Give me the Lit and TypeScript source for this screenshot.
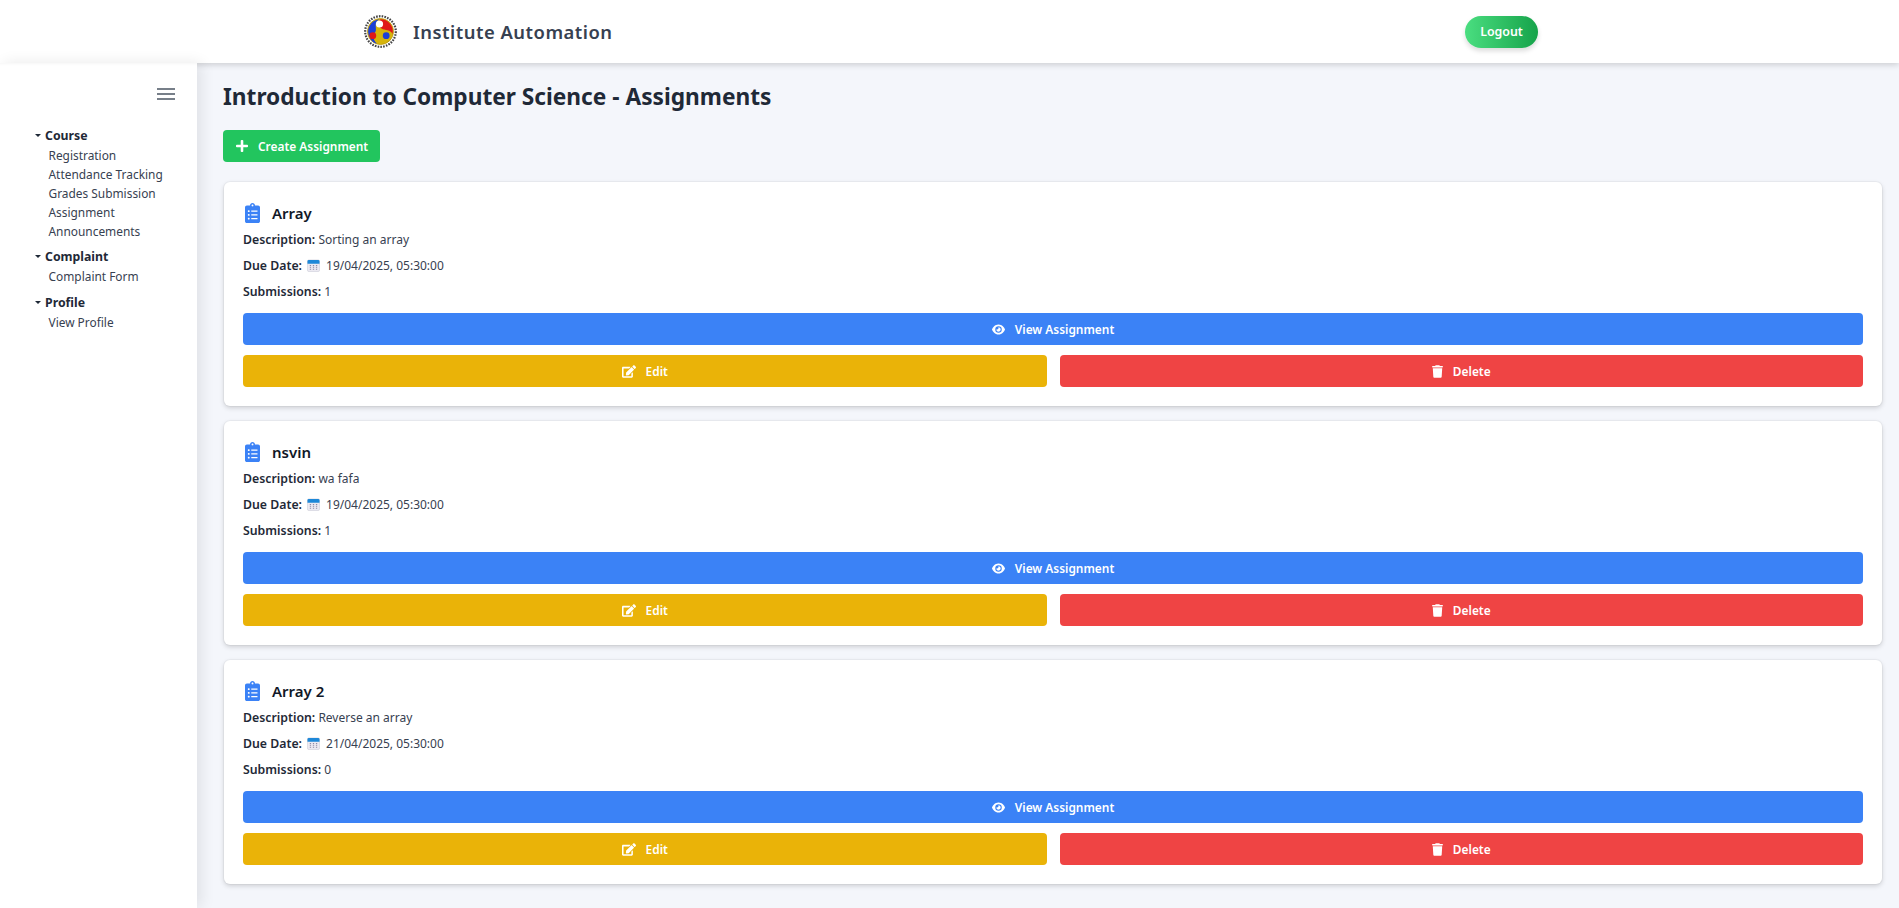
import { LitElement, html, css, svg } from "lit";
import { customElement } from "lit/decorators.js";

const icons = {
  plus: svg`<path d="M416 208H272V64c0-17.67-14.33-32-32-32h-32c-17.67 0-32 14.33-32 32v144H32c-17.67 0-32 14.33-32 32v32c0 17.67 14.33 32 32 32h144v144c0 17.67 14.33 32 32 32h32c17.67 0 32-14.33 32-32V304h144c17.67 0 32-14.33 32-32v-32c0-17.67-14.33-32-32-32z"/>`,
  eye: svg`<path d="M288 32c-80.8 0-145.5 36.8-192.6 80.6C48.6 156 17.3 208 2.5 243.7c-3.3 7.9-3.3 16.7 0 24.6C17.3 304 48.6 356 95.4 399.4C142.5 443.2 207.2 480 288 480s145.5-36.8 192.6-80.6c46.8-43.5 78.1-95.4 93-131.1c3.3-7.9 3.3-16.7 0-24.6c-14.9-35.7-46.2-87.7-93-131.1C433.5 68.8 368.8 32 288 32zM144 256a144 144 0 1 1 288 0 144 144 0 1 1 -288 0zm144-64c0 35.3-28.7 64-64 64c-7.1 0-13.9-1.2-20.3-3.3c-5.5-1.8-11.9 1.6-11.7 7.4c.3 6.9 1.3 13.8 3.2 20.7c13.7 51.2 66.4 81.6 117.6 67.9s81.6-66.4 67.9-117.6c-11.1-41.5-47.8-69.4-88.6-71.1c-5.8-.2-9.2 6.1-7.4 11.7c2.1 6.4 3.3 13.2 3.3 20.3z"/>`,
  trash: svg`<path d="M135.2 17.7L128 32H32C14.3 32 0 46.3 0 64S14.3 96 32 96H416c17.7 0 32-14.3 32-32s-14.3-32-32-32H320l-7.2-14.3C307.4 6.8 296.3 0 284.2 0H163.8c-12.1 0-23.2 6.8-28.6 17.7zM416 128H32L53.2 467c1.6 25.3 22.6 45 47.9 45H346.9c25.3 0 46.3-19.7 47.9-45L416 128z"/>`,
  edit: svg`<path d="M402.6 83.2l90.2 90.2c3.8 3.8 3.8 10 0 13.8L274.4 405.6l-92.8 10.3c-12.4 1.4-22.9-9.1-21.5-21.5l10.3-92.8L388.8 83.2c3.8-3.8 10-3.8 13.8 0zm162-22.9l-48.8-48.8c-15.2-15.2-39.9-15.2-55.2 0l-35.4 35.4c-3.8 3.8-3.8 10 0 13.8l90.2 90.2c3.8 3.8 10 3.8 13.8 0l35.4-35.4c15.2-15.3 15.2-40 0-55.2zM384 346.2V448H64V128h229.8c3.2 0 6.2-1.3 8.5-3.5l40-40c7.6-7.6 2.2-20.5-8.5-20.5H48C21.5 64 0 85.5 0 112v352c0 26.5 21.5 48 48 48h352c26.5 0 48-21.5 48-48V306.2c0-10.7-12.9-16-20.5-8.5l-40 40c-2.2 2.3-3.5 5.3-3.5 8.5z"/>`,
  clipboard: svg`<path d="M336 64h-80c0-35.3-28.7-64-64-64s-64 28.7-64 64H48C21.5 64 0 85.5 0 112v352c0 26.5 21.5 48 48 48h288c26.5 0 48-21.5 48-48V112c0-26.5-21.5-48-48-48zM96 424c-13.3 0-24-10.7-24-24s10.7-24 24-24 24 10.7 24 24-10.7 24-24 24zm0-96c-13.3 0-24-10.7-24-24s10.7-24 24-24 24 10.7 24 24-10.7 24-24 24zm0-96c-13.3 0-24-10.7-24-24s10.7-24 24-24 24 10.7 24 24-10.7 24-24 24zm96-192c13.3 0 24 10.7 24 24s-10.7 24-24 24-24-10.7-24-24 10.7-24 24-24zm128 368c0 4.4-3.6 8-8 8H168c-4.4 0-8-3.6-8-8v-16c0-4.4 3.6-8 8-8h144c4.4 0 8 3.6 8 8v16zm0-96c0 4.4-3.6 8-8 8H168c-4.4 0-8-3.6-8-8v-16c0-4.4 3.6-8 8-8h144c4.4 0 8 3.6 8 8v16zm0-96c0 4.4-3.6 8-8 8H168c-4.4 0-8-3.6-8-8v-16c0-4.4 3.6-8 8-8h144c4.4 0 8 3.6 8 8v16z"/>`,
};

const menu = [
  { title: "Course", items: ["Registration", "Attendance Tracking", "Grades Submission", "Assignment", "Announcements"] },
  { title: "Complaint", items: ["Complaint Form"] },
  { title: "Profile", items: ["View Profile"] },
];

const assignments = [
  { title: "Array", description: "Sorting an array", due: "19/04/2025, 05:30:00", submissions: 1 },
  { title: "nsvin", description: "wa fafa", due: "19/04/2025, 05:30:00", submissions: 1 },
  { title: "Array 2", description: "Reverse an array", due: "21/04/2025, 05:30:00", submissions: 0 },
];

@customElement("app-root")
export class AppRoot extends LitElement {
  static styles = css`
    :host {
      display: flex;
      flex-direction: column;
      height: 908px;
      overflow: hidden;
      font-family: "Noto Sans", "Open Sans", sans-serif;
      color: #1f2937;
      background: #f4f6fb;
    }
    .header {
      position: relative;
      z-index: 2;
      flex: none;
      height: 63px;
      box-sizing: border-box;
      padding: 0 361px 0 364px;
      display: flex;
      align-items: center;
      justify-content: space-between;
      background: #fff;
      box-shadow: 0 2px 6px rgba(0, 0, 0, 0.16);
    }
    .brand {
      display: flex;
      align-items: center;
      gap: 16px;
    }
    .logo {
      width: 33px;
      height: 33px;
      display: block;
    }
    .brand-name {
      font-size: 18.4px;
      font-weight: 600;
      letter-spacing: 0.5px;
      color: #374151;
    }
    .logout {
      width: 73px;
      height: 32px;
      border: none;
      padding: 0;
      border-radius: 16px;
      font: 600 12.4px "Noto Sans", sans-serif;
      color: #fff;
      background: linear-gradient(to right, #4ade80, #16a34a);
      box-shadow: 0 3px 5px rgba(0, 0, 0, 0.14);
    }
    .body {
      flex: 1;
      min-height: 0;
      display: flex;
    }
    .sidebar {
      position: relative;
      z-index: 3;
      flex: none;
      width: 197px;
      box-sizing: border-box;
      background: #fff;
      box-shadow: 4px 0 14px rgba(0, 0, 0, 0.09), inset 0 3px 3px -2px rgba(0, 0, 0, 0.04);
      padding: 25px 22px 0 35px;
    }
    .burger {
      display: block;
      width: 18px;
      height: 12px;
      margin-left: auto;
      margin-bottom: 24.5px;
    }
    .group {
      margin-bottom: 5px;
    }
    .group-title {
      display: flex;
      align-items: center;
      gap: 4px;
      height: 21px;
      font-size: 12.3px;
      font-weight: 700;
      color: #1f2937;
    }
    .caret {
      width: 6px;
      height: 3px;
      display: block;
    }
    .link {
      height: 19.2px;
      line-height: 19.2px;
      margin-left: 13.5px;
      font-size: 11.9px;
      color: #374151;
      white-space: nowrap;
    }
    .main {
      flex: 1;
      min-width: 0;
      box-sizing: border-box;
      padding: 19px 17px 0 27px;
    }
    h1 {
      margin: 0 0 18px -1px;
      font-size: 22.7px;
      line-height: 30px;
      font-weight: 700;
      color: #1f2937;
    }
    .create {
      display: flex;
      width: fit-content;
      align-items: center;
      gap: 10px;
      height: 32px;
      box-sizing: border-box;
      padding: 0 12px 0 13px;
      margin: 0 0 20px -1px;
      border-radius: 4px;
      background: #22c55e;
      color: #fff;
      font-size: 11.9px;
      font-weight: 600;
    }
    .create svg {
      width: 12px;
      height: 14px;
      fill: #fff;
    }
    .cards {
      display: flex;
      flex-direction: column;
      gap: 15px;
    }
    .card {
      box-sizing: border-box;
      height: 224px;
      padding: 20px 19px;
      background: #fff;
      border-radius: 6px;
      box-shadow: 0 2px 5px rgba(0, 0, 0, 0.16), 0 0 0 1px rgba(0, 0, 0, 0.03);
    }
    .card-title {
      display: flex;
      align-items: center;
      gap: 12px;
      height: 21px;
      margin-bottom: 4px;
      font-size: 15px;
      font-weight: 600;
      color: #111827;
    }
    .card-title svg {
      width: 15px;
      height: 20px;
      margin-left: 2px;
      fill: #3b82f6;
    }
    .row {
      height: 26px;
      line-height: 26px;
      font-size: 12px;
      color: #374151;
      white-space: nowrap;
    }
    .row b {
      font-size: 12.3px;
      font-weight: 600;
      color: #1f2937;
    }
    .cal {
      width: 13px;
      height: 13px;
      margin: 0 6px 0 5px;
      vertical-align: -2px;
    }
    .actions {
      display: grid;
      grid-template-columns: 1fr 1fr;
      gap: 10px 13px;
      margin-top: 8px;
    }
    .btn {
      display: flex;
      align-items: center;
      justify-content: center;
      gap: 10px;
      height: 32px;
      border-radius: 4px;
      color: #fff;
      font-size: 11.9px;
      font-weight: 600;
    }
    .btn svg {
      height: 13px;
      fill: #fff;
    }
    .view {
      grid-column: 1 / 3;
      background: #3b82f6;
    }
    .edit {
      background: #eab308;
    }
    .delete {
      background: #ef4444;
    }
  `;

  private icon(name: keyof typeof icons, box: string, w: number) {
    return html`<svg viewBox=${box} style="width:${w}px" aria-hidden="true">${icons[name]}</svg>`;
  }

  private renderLogo() {
    return html`<svg class="logo" viewBox="0 0 33 33" aria-label="Institute logo">
      <circle cx="16.5" cy="16.5" r="15.3" fill="#fff" stroke="#444" stroke-width="2.2" stroke-dasharray="1.6 1.2" />
      <circle cx="16.5" cy="16.5" r="13" fill="#d6b40a" stroke="#b8960a" stroke-width="0.8" />
      <path d="M16.5 4.2A12.3 12.3 0 0 1 28.6 19C26.5 14.5 21 15.5 17.5 13.5C14.5 11.7 13 7 16.5 4.2Z" fill="#e01818" />
      <path d="M15.5 4.2A12.3 12.3 0 0 0 6 23C7 26 10 28 13 28.6C9 25 8.5 20.5 11 17.5C13 15 11 11 12 8C12.7 6 14 5 15.5 4.2Z" fill="#1c3fd6" />
      <circle cx="15.5" cy="9" r="3.6" fill="#fff" />
      <circle cx="8.8" cy="20.7" r="3.4" fill="#e01818" />
      <circle cx="22.2" cy="20.7" r="3.4" fill="#1c3fd6" />
    </svg>`;
  }

  private renderCalendar() {
    return html`<svg class="cal" viewBox="0 0 14 14" aria-hidden="true">
      <rect x="0.5" y="1" width="13" height="12.5" rx="1.5" fill="#eceaf2" stroke="#c9c9d6" stroke-width="0.6" />
      <path d="M0.5 5V2.5A1.5 1.5 0 0 1 2 1h10a1.5 1.5 0 0 1 1.5 1.5V5z" fill="#1e88d8" />
      <path d="M3 7h1.4M6.3 7h1.4M9.6 7h1.4M3 9h1.4M6.3 9h1.4M9.6 9h1.4M3 11h1.4M6.3 11h1.4M9.6 11h1.4" stroke="#8d8aa6" stroke-width="1.1" />
    </svg>`;
  }

  render() {
    return html`
      <div class="header">
        <div class="brand">
          ${this.renderLogo()}
          <span class="brand-name">Institute Automation</span>
        </div>
        <button class="logout">Logout</button>
      </div>
      <div class="body">
        <nav class="sidebar">
          <svg class="burger" viewBox="0 0 18 12" aria-label="Menu">
            <path d="M0 1h18M0 6h18M0 11h18" stroke="#4b5563" stroke-width="1.4" />
          </svg>
          ${menu.map(
            (group) => html`<div class="group">
              <div class="group-title">
                <svg class="caret" viewBox="0 0 6 3"><path d="M0 0h6L3 3z" fill="#1f2937" /></svg>
                <span>${group.title}</span>
              </div>
              ${group.items.map((item) => html`<div class="link">${item}</div>`)}
            </div>`
          )}
        </nav>
        <main class="main">
          <h1>Introduction to Computer Science - Assignments</h1>
          <div class="create">
            <svg viewBox="0 0 448 512" aria-hidden="true">${icons.plus}</svg>
            <span>Create Assignment</span>
          </div>
          <div class="cards">
            ${assignments.map(
              (a) => html`<section class="card">
                <div class="card-title">
                  <svg viewBox="0 0 384 512" aria-hidden="true">${icons.clipboard}</svg>
                  <span>${a.title}</span>
                </div>
                <div class="row"><b>Description:</b> ${a.description}</div>
                <div class="row"><b>Due Date:</b>${this.renderCalendar()}${a.due}</div>
                <div class="row"><b>Submissions:</b> ${a.submissions}</div>
                <div class="actions">
                  <div class="btn view">${this.icon("eye", "0 0 576 512", 13)}<span>View Assignment</span></div>
                  <div class="btn edit">${this.icon("edit", "0 0 576 512", 14)}<span>Edit</span></div>
                  <div class="btn delete">${this.icon("trash", "0 0 448 512", 11)}<span>Delete</span></div>
                </div>
              </section>`
            )}
          </div>
        </main>
      </div>
    `;
  }
}
